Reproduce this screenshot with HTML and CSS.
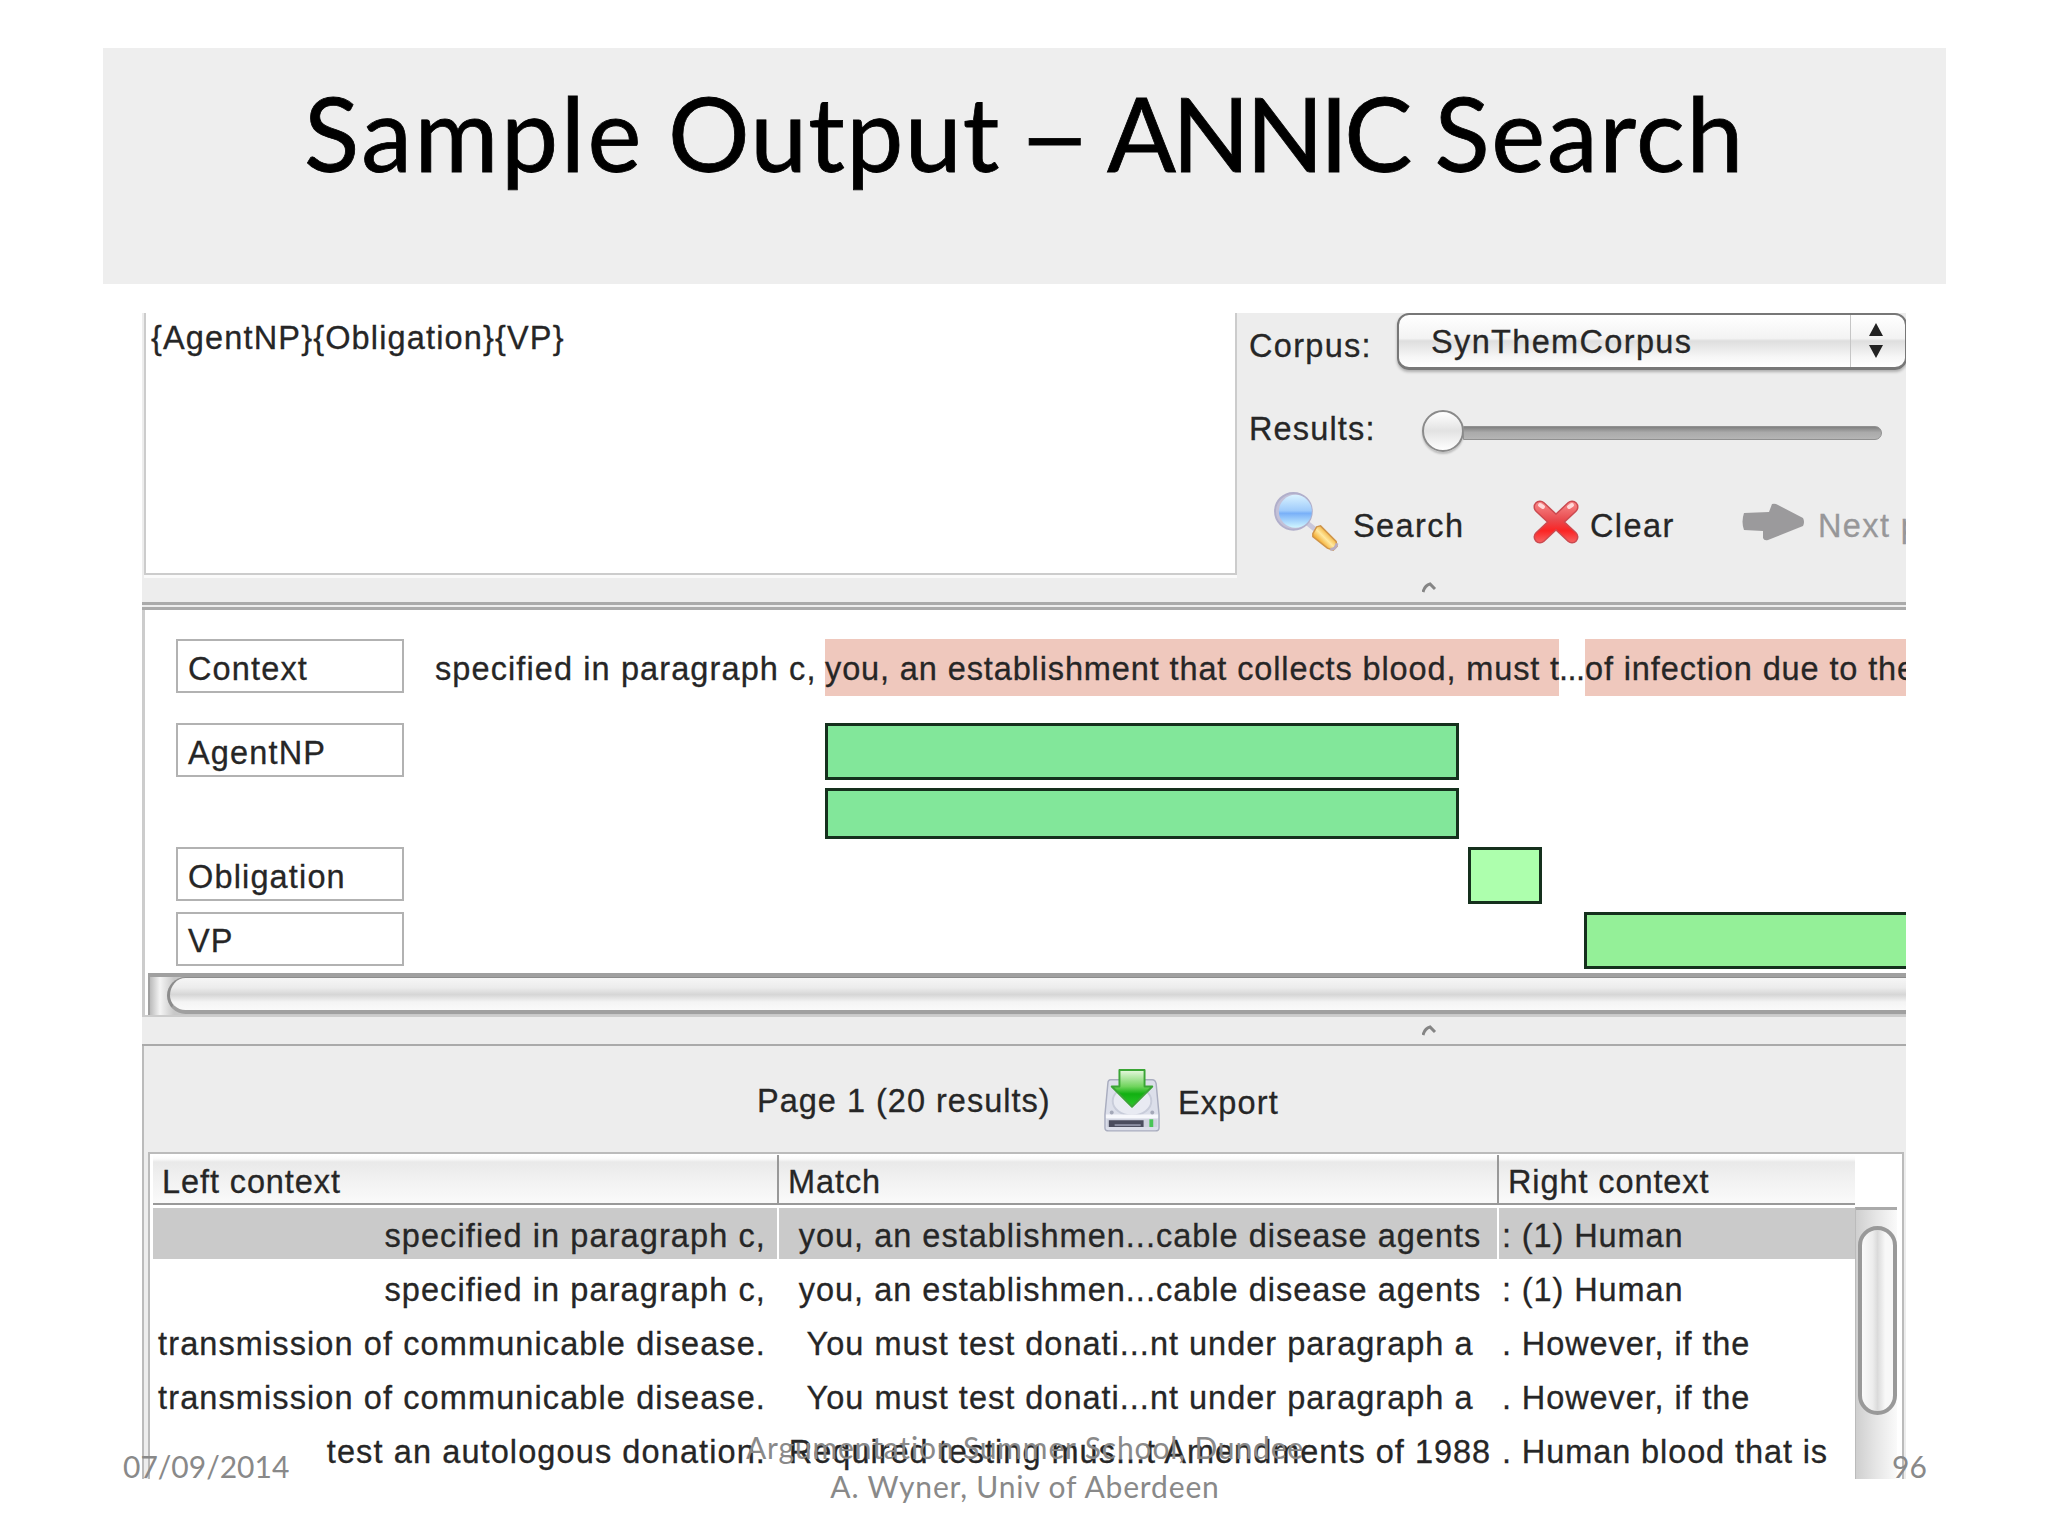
FILE: index.html
```html
<!DOCTYPE html>
<html lang="en">
<head>
    <meta charset="UTF-8">
    <title>Sample Output – ANNIC Search</title>
    <link rel="stylesheet" href="styles.css">
</head>
<body>
    <div class="slide">
        <header class="title-bar">
            <h1><span class="word-sample">Sample</span> <span class="word-output">Output</span> <span class="dash">–</span> <span class="word-annic">ANNIC</span> <span class="word-search">Search</span></h1>
        </header>

        <main class="app">
            <section class="top">
                <div class="query">{AgentNP}{Obligation}{VP}</div>
                <div class="controls">
                    <div class="control-row corpus-row">
                        <span class="label corpus-label">Corpus:</span>
                        <div class="select">
                            <span class="select-text">SynThemCorpus</span>
                            <span class="select-arrows">
                                <svg width="16" height="36" viewBox="0 0 16 36"><path d="M8 0L15 13H1Z M1 22H15L8 35Z" fill="#222"/></svg>
                            </span>
                        </div>
                    </div>
                    <div class="control-row results-row">
                        <span class="label results-label">Results:</span>
                        <div class="slider"><span class="knob"></span><span class="track"></span></div>
                    </div>
                    <div class="control-row button-row">
                        <div class="btn search-btn">
                            <svg width="66" height="64" viewBox="0 0 68 66">
                                <defs>
                                    <linearGradient id="lens" x1="0" y1="0" x2="0" y2="1">
                                        <stop offset="0" stop-color="#d9f2ff"/>
                                        <stop offset="0.48" stop-color="#9fcbfb"/>
                                        <stop offset="0.56" stop-color="#79b0f8"/>
                                        <stop offset="1" stop-color="#d0f6ff"/>
                                    </linearGradient>
                                    <linearGradient id="handle" x1="0" y1="1" x2="1" y2="0">
                                        <stop offset="0.25" stop-color="#f09a10"/>
                                        <stop offset="0.5" stop-color="#ffe9a0"/>
                                        <stop offset="0.75" stop-color="#f0a01c"/>
                                    </linearGradient>
                                </defs>
                                <path d="M34 34L44 42" stroke="#c9c7da" stroke-width="5"/>
                                <circle cx="20" cy="22" r="19" fill="#c3c1d8" stroke="#b1afcb" stroke-width="2"/>
                                <circle cx="22" cy="22" r="17" fill="url(#lens)"/>
                                <path d="M40 45L44 38L48 37L64 53L65 58L61 62L55 60L40 48Z" fill="url(#handle)" stroke="#cf9448" stroke-width="1.5"/>
                                <path d="M58 61Q63 62 65 55" fill="none" stroke="#b9adc0" stroke-width="3"/>
                            </svg>
                            <span>Search</span>
                        </div>
                        <div class="btn clear-btn">
                            <svg width="46" height="44" viewBox="0 0 46 44">
                                <defs>
                                    <linearGradient id="cross" gradientUnits="userSpaceOnUse" x1="0" y1="0" x2="0" y2="44">
                                        <stop offset="0" stop-color="#f98f8f"/>
                                        <stop offset="0.45" stop-color="#e94a4e"/>
                                        <stop offset="0.7" stop-color="#fb2424"/>
                                        <stop offset="1" stop-color="#f56a6a"/>
                                    </linearGradient>
                                </defs>
                                <path d="M7 7L39 37M39 7L7 37" stroke="#cb4a50" stroke-width="13" stroke-linecap="round"/>
                                <path d="M7 7L39 37M39 7L7 37" stroke="url(#cross)" stroke-width="10" stroke-linecap="round"/>
                                <path d="M7 5L10 7M39 5L36 7" stroke="#ffd9d9" stroke-width="4" stroke-linecap="round"/>
                            </svg>
                            <span>Clear</span>
                        </div>
                        <div class="btn next-btn">
                            <svg width="64" height="38" viewBox="0 0 64 38">
                                <path d="M3 10L28 9L31 1Q34 0 37 2L62 15Q64 19 62 23L27 37Q23 38 22 35L22 28L3 27Q0 19 3 10Z" fill="#9b9a9c"/>
                            </svg>
                            <span>Next page</span>
                        </div>
                    </div>
                </div>
            </section>

            <div class="divider divider-top">
                <svg class="caret" width="15" height="12" viewBox="0 0 15 12"><path d="M1 10Q3 3 8 2L13 7" fill="none" stroke="#858585" stroke-width="3"/></svg>
            </div>

            <section class="stack">
                <div class="stack-rows">
                    <div class="stack-row context-row">
                        <span class="tag">Context</span>
                        <p class="context"><span class="left-text">specified in paragraph c,</span><mark class="first">you, an establishment that collects blood, must t</mark><span class="dots">...</span><mark class="second">of infection due to the</mark></p>
                    </div>
                    <div class="stack-row agent-row">
                        <span class="tag">AgentNP</span>
                        <div class="bars">
                            <span class="bar agent"></span>
                            <span class="bar agent short"></span>
                        </div>
                    </div>
                    <div class="stack-row obligation-row">
                        <span class="tag">Obligation</span>
                        <span class="bar obligation"></span>
                    </div>
                    <div class="stack-row vp-row">
                        <span class="tag">VP</span>
                        <span class="bar vp"></span>
                    </div>
                </div>
                <div class="hscroll"><span class="hthumb"></span></div>
            </section>

            <div class="divider divider-bottom">
                <svg class="caret" width="15" height="12" viewBox="0 0 15 12"><path d="M1 10Q3 3 8 2L13 7" fill="none" stroke="#858585" stroke-width="3"/></svg>
            </div>

            <section class="results">
                <div class="toolbar">
                    <span class="page-info">Page 1 (20 results)</span>
                    <svg class="export-icon" width="56" height="66" viewBox="0 0 58 66">
                        <defs>
                            <linearGradient id="down" x1="0" y1="0" x2="0" y2="1">
                                <stop offset="0" stop-color="#e8f8e0"/>
                                <stop offset="0.45" stop-color="#6fd45c"/>
                                <stop offset="0.65" stop-color="#12b012"/>
                                <stop offset="1" stop-color="#2cc82c"/>
                            </linearGradient>
                        </defs>
                        <path d="M7 12H50Q53 12 54 16L57 48V62Q57 65 53 65H5Q1 65 1 62V48L4 16Q4 12 7 12Z" fill="#dcdfea" stroke="#a9adbf" stroke-width="1.5"/>
                        <ellipse cx="29" cy="34" rx="20" ry="15" fill="#e8eaf2" stroke="#c8ccda" stroke-width="2"/>
                        <path d="M2 50H56" stroke="#f7f8fc" stroke-width="4"/>
                        <path d="M3 53H55V61H3Z" fill="#cfd2de"/>
                        <path d="M5 54H41V61H5Z" fill="#4b4d5e"/>
                        <path d="M11 59H38" stroke="#8d90a3" stroke-width="2"/>
                        <path d="M47 53H51V61H47Z" fill="#48c556"/>
                        <circle cx="8" cy="46" r="2" fill="#a4a8b8"/>
                        <circle cx="50" cy="46" r="2" fill="#a4a8b8"/>
                        <path d="M16 2H42V19H50L29 40L8 19H16Z" fill="url(#down)" stroke="#3aa535" stroke-width="2" stroke-linejoin="round"/>
                    </svg>
                    <span class="export-text">Export</span>
                </div>

                <div class="table">
                    <div class="grid">
                        <div class="row head">
                            <span>Left context</span>
                            <span>Match</span>
                            <span>Right context</span>
                        </div>
                        <div class="row selected">
                            <span>specified in paragraph c,</span>
                            <span>you, an establishmen...cable disease agents</span>
                            <span>: (1) Human</span>
                        </div>
                        <div class="row">
                            <span>specified in paragraph c,</span>
                            <span>you, an establishmen...cable disease agents</span>
                            <span>: (1) Human</span>
                        </div>
                        <div class="row">
                            <span>transmission of communicable disease.</span>
                            <span>You must test donati...nt under paragraph a</span>
                            <span>. However, if the</span>
                        </div>
                        <div class="row">
                            <span>transmission of communicable disease.</span>
                            <span>You must test donati...nt under paragraph a</span>
                            <span>. However, if the</span>
                        </div>
                        <div class="row">
                            <span>test an autologous donation.</span>
                            <span>Required testing mus...t Amendments of 1988</span>
                            <span>. Human blood that is</span>
                        </div>
                    </div>
                    <div class="vscroll"><span class="vthumb"></span></div>
                </div>
            </section>
        </main>

        <footer class="footer">
            <span class="date">07/09/2014</span>
            <span class="venue"><span class="venue-line">Argumentation Summer School, Dundee</span><span class="author-line">A. Wyner, Univ of Aberdeen</span></span>
            <span class="number">96</span>
        </footer>
    </div>
</body>
</html>
```
FILE: styles.css
```css
* { box-sizing: border-box; }
body { margin: 0; background: #fff; }
svg { display: block; flex: none; }

.slide { position: relative; width: 2048px; height: 1536px; padding-top: 48px; overflow: hidden; }

.title-bar { margin: 0 102px 0 103px; height: 236px; background: #eee; padding-top: 25px; text-align: center; }
h1 { margin: 0; font: 400 102px/120px Lato, sans-serif; color: #000; white-space: nowrap; word-spacing: -2px; -webkit-text-stroke: 0.8px #000; }
.word-sample { letter-spacing: 2.6px; }
.word-output { letter-spacing: 1.3px; }
.dash { display: inline-block; width: 58px; transform: scaleX(1.25); }
.word-annic { letter-spacing: -4px; padding-right: 2px; }
.word-search { letter-spacing: 1.7px; }

.app {
    display: flex;
    flex-direction: column;
    width: 1764px;
    height: 1166px;
    margin: 29px 0 0 142px;
    overflow: hidden;
    background: #ededed;
    color: #262626;
    font: 32.5px/38px "Liberation Sans", Arial, sans-serif;
    letter-spacing: 1.15px;
    white-space: nowrap;
    -webkit-text-stroke: 0.3px;
}

/* query box and controls */
.top { display: flex; flex: none; height: 265px; padding-left: 2px; }
.query { flex: none; width: 1093px; height: 262px; padding: 6px 0 0 5px; background: #fff; border: solid #ccc; border-width: 0 2px 2px; box-shadow: 0 3px 0 #fafafa; }
.controls { flex: none; width: 669px; padding-left: 12px; }
.control-row { display: flex; align-items: center; }
.corpus-row { height: 57px; }
.label { flex: none; }
.corpus-label { width: 148px; padding-top: 8px; letter-spacing: 1.3px; }
.select { display: flex; flex: none; align-items: center; width: 510px; height: 57px; padding-left: 32px; border: 2px solid #777; border-bottom-width: 3px; border-radius: 12px; background: linear-gradient(#fff 0%, #f3f3f3 45%, #dedede 50%, #f6f6f6 80%, #fff 100%); box-shadow: 0 2px 3px #0004; }
.select-text { flex: 1; padding-top: 2px; letter-spacing: 1.35px; }
.select-arrows { display: flex; align-items: center; width: 55px; height: 100%; padding-left: 17px; border-left: 1px solid #c6c6c6; }
.results-row { height: 50px; margin-top: 36px; }
.results-label { width: 173px; padding-bottom: 5px; }
.slider { display: flex; align-items: center; }
.knob { width: 42px; height: 42px; border: 2px solid #8a8a8a; border-radius: 50%; background: linear-gradient(#fff, #e2e2e2 50%, #fff); box-shadow: 0 2px 2px #0003; }
.track { width: 419px; height: 14px; margin: 4px 0 0 -1px; border-radius: 0 7px 7px 0; border: 1px solid #909090; background: linear-gradient(#808080, #aaa 45%, #b5b5b5); }
.button-row { height: 64px; margin-top: 34px; }
.btn { display: flex; flex: none; align-items: center; height: 64px; }
.btn span { padding-top: 7px; letter-spacing: 1.4px; }
.search-btn { gap: 13px; width: 258px; padding-left: 25px; }
.clear-btn { gap: 11px; width: 208px; padding-left: 26px; }
.next-btn { gap: 13px; padding-left: 26px; color: #979799; }

.divider { flex: none; padding-left: 1280px; }
.divider-top { height: 32px; padding-top: 4px; border-bottom: 8px double #aaa; }
.divider-bottom { height: 29px; padding-top: 8px; border-bottom: 2px solid #aaa; }

/* annotation stack */
.stack { display: flex; flex-direction: column; flex: none; height: 407px; padding-top: 29px; background: #fff; border-left: 3px solid #ccc; border-bottom: 2px solid #ccc; }
.stack-rows { height: 334px; padding-left: 31px; }
.stack-row { display: flex; align-items: flex-start; }
.context-row { height: 84px; }
.agent-row { height: 124px; }
.obligation-row { height: 65px; }
.tag { flex: none; width: 228px; height: 54px; padding: 9px 0 0 10px; border: 2px solid #b2b2b2; background: #fff; }
.vp-row .tag { padding-top: 8px; }
.context { display: flex; height: 57px; margin: 0; line-height: 60px; letter-spacing: 0.88px; }
.left-text { flex: none; width: 421px; padding-left: 31px; letter-spacing: 1.1px; }
mark { background: #efc8bd; color: inherit; }
.first { width: 734px; }
.dots { width: 26px; letter-spacing: -0.5px; }
.bars { display: flex; flex-direction: column; gap: 8px; }
.bar { flex: none; height: 57px; border: 3px solid #15301d; }
.agent { width: 634px; margin-left: 421px; background: #82e79a; }
.short { height: 51px; }
.obligation { width: 74px; margin-left: 1064px; background: #adffad; }
.vp { width: 400px; margin-left: 1180px; background: #94f098; }

.hscroll { height: 42px; margin-left: 3px; padding-left: 17px; border: solid #a0a0a0; border-width: 4px 0 0 2px; background: linear-gradient(90deg, #bbb, #f4f4f4 10px, #c8c8c8 24px); overflow: hidden; }
.hthumb { display: block; width: 1800px; height: 37px; border: 3px solid #8c8c8c; border-top-width: 1px; border-bottom: 4px solid #a0a0a0; border-radius: 19px; background: linear-gradient(#f6f6f6, #ececec 30%, #d6d6d6 52%, #f4f4f4 75%, #fafafa); }

/* results */
.results { flex: 1; padding-left: 4px; border-left: 2px solid #bbb; }
.toolbar { display: flex; height: 106px; padding: 21px 0 0 609px; }
.page-info { width: 347px; padding-top: 15px; letter-spacing: 1px; }
.export-text { padding: 17px 0 0 18px; }
.table { display: flex; width: 1756px; height: 340px; padding: 1px 0 0 3px; background: #fff; border: solid #bbb; border-width: 2px 2px 0; }
.grid { width: 1702px; }
.row { display: grid; grid-template-columns: 624px 720px 358px; height: 54px; border: solid #fff; border-width: 1px 0 2px; }
.row span { padding: 9px 0 0 6px; text-align: center; letter-spacing: 1px; }
.row span:first-child { padding: 9px 11px 0 0; text-align: right; letter-spacing: 1.1px; }
.row span:last-child { text-align: left; padding-left: 5px; letter-spacing: 0.9px; }
.selected { background: #cacaca; }
.selected span + span { border-left: 2px solid #fff; padding-left: 4px; }
.selected span:last-child { padding-left: 3px; }
.head { height: 50px; margin-bottom: 2px; border: 0; border-bottom: 2px solid #999; background: linear-gradient(#fff 0, #fafafa 4px, #e9e9e9 7px, #f0f0f0 45%, #fafafa); }
.row.head span { padding: 8px 0 0 9px; text-align: left; letter-spacing: 0.9px; }
.row.head span + span { border-left: 2px solid #999; }
.vscroll { width: 42px; height: 272px; margin-top: 52px; padding: 16px 0 0 2px; border-top: 3px solid #aaa; border-left: 1px solid #bbb; background: linear-gradient(90deg, #cfcfcf, #e6e6e6 50%, #fafafa); }
.vthumb { display: block; width: 39px; height: 189px; border: 4px solid #999; border-radius: 20px; background: linear-gradient(90deg, #fafafa, #ececec 35%, #dadada 50%, #f8f8f8 75%); }

/* slide footer lies over the bottom of the app window */
.footer { position: absolute; left: 0; top: 1428px; display: flex; width: 2048px; height: 90px; padding-left: 123px; font: 30px/39px Lato, sans-serif; color: #898989; white-space: nowrap; }
.date, .number { padding-top: 19px; }
.date { width: 614px; }
.venue { width: 576px; text-align: center; letter-spacing: 0.85px; }
.venue-line, .author-line { display: block; }
.number { padding-left: 579px; }
```
